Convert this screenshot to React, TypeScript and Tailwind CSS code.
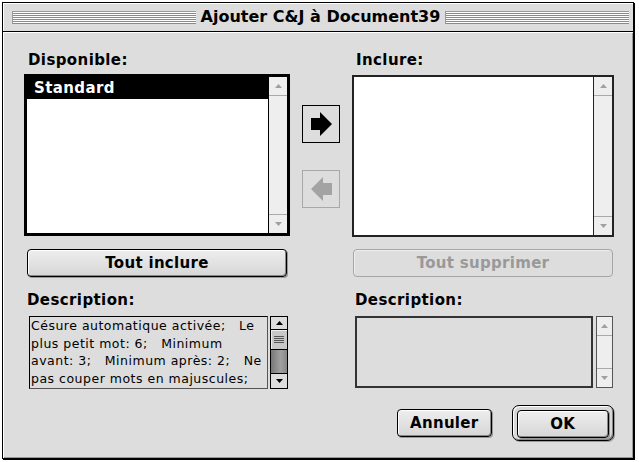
import React from 'react';

const Stripes: React.FC = () => (
  <div className="flex-1 h-[13px] border-l border-t border-[#999] border-r-white border-b-white bg-[repeating-linear-gradient(to_bottom,#fff_0px,#fff_1px,#8a8a8a_1px,#8a8a8a_2px)]" />
);

const Tri: React.FC<{ up?: boolean; color: string }> = ({ up, color }) => (
  <svg width="7" height="4" viewBox="0 0 7 4">
    <path d={up ? 'M0 4L3.5 0L7 4Z' : 'M0 0L3.5 4L7 0Z'} fill={color} />
  </svg>
);

const IdleScroll: React.FC<{ className?: string }> = ({ className }) => (
  <div className={`flex flex-col bg-[#eeeeee] ${className ?? ''}`}>
    <div className="h-[19px] flex items-center justify-center border-b border-[#aaa]">
      <Tri up color="#a0a0a0" />
    </div>
    <div className="flex-1" />
    <div className="h-[19px] flex items-center justify-center border-t border-[#aaa]">
      <Tri color="#a0a0a0" />
    </div>
  </div>
);

const ActiveScroll: React.FC = () => (
  <div className="w-[18px] h-[73px] border border-black flex flex-col bg-[#8e8e8e]">
    <div className="h-[13px] flex items-center justify-center border-b border-black bg-[#dddddd]">
      <Tri up color="#000" />
    </div>
    <div className="h-[20px] border-b border-black bg-[#c8c8c8] flex flex-col items-center justify-center gap-[1px] shadow-[inset_1px_1px_0_#eee]">
      <div className="w-[10px] h-px bg-[#555]" />
      <div className="w-[10px] h-px bg-[#555]" />
      <div className="w-[10px] h-px bg-[#555]" />
      <div className="w-[10px] h-px bg-[#555]" />
    </div>
    <div className="flex-1 bg-[linear-gradient(to_right,#777,#a0a0a0_60%,#888)]" />
    <div className="h-[15px] flex items-center justify-center border-t border-black bg-[#dddddd]">
      <Tri color="#000" />
    </div>
  </div>
);

const Arrow: React.FC<{ left?: boolean; color: string }> = ({ left, color }) => (
  <svg width="21" height="24" viewBox="0 0 21 24" className={left ? '-scale-x-100' : ''}>
    <path d="M0 6H9V0L21 12L9 24V18H0Z" fill={color} />
  </svg>
);

const PushButton: React.FC<{ label: string; disabled?: boolean; className?: string }> = ({ label, disabled, className }) => (
  <div
    className={`h-[28px] rounded-[4px] border flex items-center justify-center text-[15px] font-bold tracking-[0.3px] ${
      disabled
        ? 'border-[#a5a5a5] text-[#999] bg-[#dddddd] shadow-[inset_1px_1px_0_#eee]'
        : 'border-black text-black bg-[linear-gradient(to_bottom,#eeeeee,#d6d6d6)] shadow-[inset_1px_1px_0_#fff,inset_-1px_-1px_0_#888,1px_1px_0_#999]'
    } ${className ?? ''}`}
  >
    {label}
  </div>
);

const descLines = [
  'Césure automatique activée;   Le',
  'plus petit mot: 6;   Minimum',
  'avant: 3;   Minimum après: 2;   Ne',
  'pas couper mots en majuscules;',
];

export default function App() {
  return (
    <div className="w-[639px] h-[462px] bg-white font-['DejaVu_Sans',sans-serif] text-black overflow-hidden">
      <div className="ml-[2px] mt-[2px] w-[632px] h-[457px] border border-black shadow-[1px_1px_0_#000] bg-[#dddddd] flex flex-col">
        {/* title bar */}
        <div className="h-[29px] border-b border-black flex items-center gap-[5px] pl-[9px] pr-[4px] shadow-[inset_1px_1px_0_#fff]">
          <Stripes />
          <div className="text-[16px] font-bold leading-[20px] whitespace-nowrap">Ajouter C&amp;J à Document39</div>
          <Stripes />
        </div>

        {/* body */}
        <div className="flex-1 flex pl-[21px] pt-[18px] shadow-[inset_1px_1px_0_#fff,inset_-1px_-1px_0_#999]">
          {/* left column */}
          <div className="w-[266px] flex flex-col">
            <div className="h-[20px] leading-[20px] pl-[4px] text-[15px] font-bold tracking-[0.4px]">Disponible:</div>
            <div className="mt-[4px] h-[162px] border-[3px] border-black flex bg-white">
              <div className="flex-1">
                <div className="h-[22px] bg-black text-white text-[15px] font-bold tracking-[0.4px] leading-[22px] pl-[7px]">Standard</div>
              </div>
              <IdleScroll className="w-[19px] border-l border-black" />
            </div>
            <PushButton label="Tout inclure" className="mt-[13px] ml-[3px] w-[260px]" />
            <div className="mt-[13px] h-[20px] leading-[20px] pl-[3px] text-[15px] font-bold tracking-[0.4px]">Description:</div>
            <div className="mt-[6px] ml-[5px] flex gap-[2px]">
              <div className="w-[239px] h-[73px] border border-black border-r-[#555] border-b-[#555] overflow-hidden pl-[1px] text-[12.5px] leading-[17.5px] tracking-[0.5px]">
                {descLines.map((l) => (
                  <div key={l} className="whitespace-pre">{l}</div>
                ))}
              </div>
              <ActiveScroll />
            </div>
          </div>

          {/* arrows */}
          <div className="w-[62px] flex flex-col items-center pt-[55px]">
            <div className="w-[38px] h-[38px] border border-black flex items-center justify-center">
              <Arrow color="#000" />
            </div>
            <div className="mt-[27px] w-[38px] h-[38px] border border-[#a8a8a8] flex items-center justify-center">
              <Arrow left color="#a3a3a3" />
            </div>
          </div>

          {/* right column */}
          <div className="w-[262px] flex flex-col">
            <div className="h-[20px] leading-[20px] pl-[4px] text-[15px] font-bold tracking-[0.4px]">Inclure:</div>
            <div className="mt-[5px] h-[162px] border-2 border-[#222] flex bg-white">
              <div className="flex-1" />
              <IdleScroll className="w-[19px] border-l border-[#222]" />
            </div>
            <PushButton label="Tout supprimer" disabled className="mt-[12px] ml-[1px] w-[260px]" />
            <div className="mt-[13px] h-[20px] leading-[20px] pl-[3px] text-[15px] font-bold tracking-[0.4px]">Description:</div>
            <div className="mt-[6px] ml-[3px] flex gap-[3px]">
              <div className="w-[238px] h-[72px] border-2 border-[#333]" />
              <IdleScroll className="w-[17px] h-[72px] border border-[#555]" />
            </div>
            <div className="mt-[17px] ml-[45px] flex items-center gap-[20px]">
              <PushButton label="Annuler" className="w-[96px]" />
              <div className="w-[104px] h-[36px] rounded-[7px] border border-black p-[4px] bg-[#d8d8d8] shadow-[inset_1px_1px_0_#fff,inset_-1px_-1px_0_#888,1px_1px_0_#999]">
                <PushButton label="OK" className="h-[26px] w-full" />
              </div>
            </div>
          </div>
        </div>
      </div>
    </div>
  );
}
